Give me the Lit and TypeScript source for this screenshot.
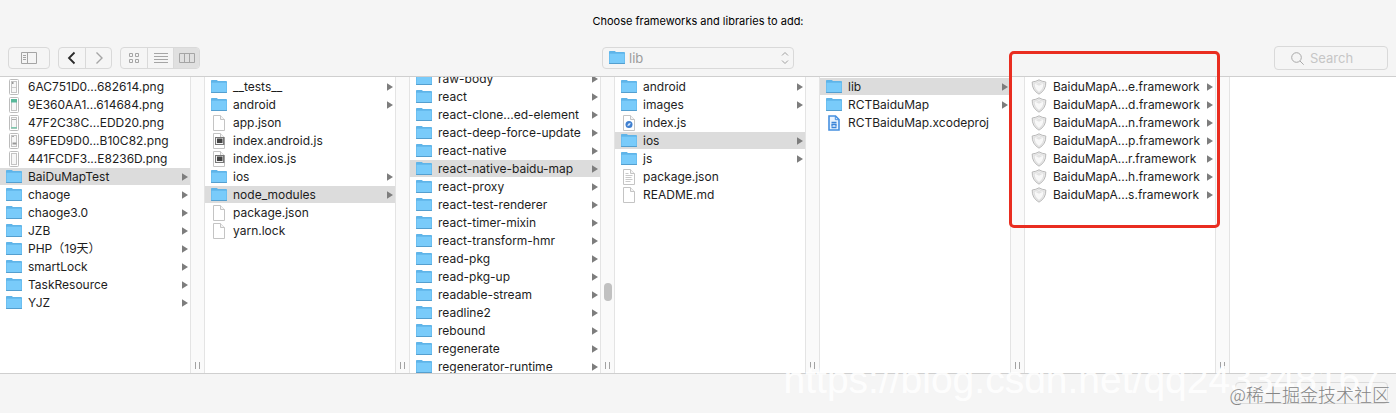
import { LitElement, html, svg, css, nothing } from "lit";
import { customElement, property } from "lit/decorators.js";
import { classMap } from "lit/directives/class-map.js";

type Kind = "folder" | "doc" | "text" | "term" | "web" | "xcode" | "shield" | "shot1" | "shot2" | "shot3" | "shot4" | "shot5";
interface Entry { name: string; kind: Kind; open?: boolean; selected?: boolean; }
interface Pane { label: string; entries: Entry[]; scrolled?: boolean; marked?: boolean; }

const dir = (name: string, selected = false): Entry => ({ name, kind: "folder", open: true, selected });
const file = (name: string, kind: Kind = "doc"): Entry => ({ name, kind });

const panes: Pane[] = [
  {
    label: "Projects",
    entries: [
      file("6AC751D0...682614.png", "shot1"),
      file("9E360AA1...614684.png", "shot2"),
      file("47F2C38C...EDD20.png", "shot3"),
      file("89FED9D0...B10C82.png", "shot4"),
      file("441FCDF3...E8236D.png", "shot5"),
      dir("BaiDuMapTest", true), dir("chaoge"), dir("chaoge3.0"), dir("JZB"),
      dir("PHP（19天）"), dir("smartLock"), dir("TaskResource"), dir("YJZ"),
    ],
  },
  {
    label: "BaiDuMapTest",
    entries: [
      dir("__tests__"), dir("android"), file("app.json"),
      file("index.android.js", "term"), file("index.ios.js", "term"),
      dir("ios"), dir("node_modules", true), file("package.json"), file("yarn.lock"),
    ],
  },
  {
    label: "node_modules",
    scrolled: true,
    entries: [
      dir("raw-body"), dir("react"), dir("react-clone...ed-element"), dir("react-deep-force-update"),
      dir("react-native"), dir("react-native-baidu-map", true), dir("react-proxy"),
      dir("react-test-renderer"), dir("react-timer-mixin"), dir("react-transform-hmr"),
      dir("read-pkg"), dir("read-pkg-up"), dir("readable-stream"), dir("readline2"),
      dir("rebound"), dir("regenerate"), dir("regenerator-runtime"),
    ],
  },
  {
    label: "react-native-baidu-map",
    entries: [
      dir("android"), dir("images"), file("index.js", "web"), dir("ios", true), dir("js"),
      file("package.json", "text"), file("README.md"),
    ],
  },
  { label: "ios", entries: [dir("lib", true), dir("RCTBaiduMap"), file("RCTBaiduMap.xcodeproj", "xcode")] },
  {
    label: "lib",
    marked: true,
    entries: ["e", "d", "n", "p", "r", "h", "s"].map((c): Entry => ({ name: `BaiduMapA...${c}.framework`, kind: "shield", open: true })),
  },
];

const page = svg`<path d="M2.500 .5h7l4 4v11h-11z" fill="#fff" stroke="#c4c4c4"/><path d="M9.500 .5v4h4" fill="#f4f4f4" stroke="#c4c4c4"/>`;
const shot = (inner: unknown) => svg`<rect x="3.500" y=".5" width="9" height="15" rx="1" fill="#fff" stroke="#bcbcbc"/><rect x="5.500" y="2.500" width="5" height="11" fill="#f7f7f7" stroke="#c4c4c4"/>${inner}`;

const art: Record<Kind, unknown> = {
  folder: svg`<path d="M0 2.500V1.700q0-.8.8-.8h5l1.200 1.200h8.200q.8 0 .8.8v10.400q0 .7-.7.700H.7q-.7 0-.7-.7z" fill="#5fb4e8"/><path d="M.5 3.700h15v9.300H.5z" fill="#79cbfa"/><path d="M0 13h16v.3q0 .7-.7.700H.7q-.7 0-.7-.7z" fill="#549fcf"/>`,
  doc: page,
  text: svg`${page}<path d="M4.500 4.500h3M4.500 6.500h7M4.500 8.500h6M4.500 10.500h7M4.500 12.500h5" stroke="#c9c9c9"/>`,
  term: svg`${page}<rect x="4" y="4" width="9.500" height="8" fill="#777"/><path d="M5 5h7v6H5z" fill="#eee"/><path d="M6 5.500h5.500V10H6z" fill="#444"/>`,
  web: svg`${page}<circle cx="8" cy="9.500" r="3.500" fill="#3f7fd0"/><path d="M6.200 11.300l1-2.600 2.600-1-1 2.600z" fill="#d8e8fb"/>`,
  xcode: svg`<path d="M3 1h6.500L13 4.500V15H3z" fill="#eaf4ff" stroke="#4690e0" stroke-width="1.600"/><path d="M9.300 1v3.700H13" fill="none" stroke="#4690e0"/><path d="M5.500 7.500h5M5.500 12.500h5M6 11.500V9.500h4v2" fill="none" stroke="#3c85d8" stroke-width="1.300"/>`,
  shield: svg`<path d="M8 .8q3 1.800 6.800 2.200.4 8-6.800 12.200Q.8 11 1.200 3 5 2.600 8 .8z" fill="#ededed" stroke="#b9b9b9"/><path d="M8 2.600q2.300 1.300 5 1.700 0 6-5 9.200-5-3.200-5-9.200 2.700-.4 5-1.700z" fill="#f8f8f8" stroke="#d6d6d6" stroke-width=".8"/><path d="M4.500 5L8 6.800 11.500 5 8 3.800z" fill="#e3e3e3"/>`,
  shot1: shot(svg`<path d="M6 3h1.500v2H6z" fill="#999"/><path d="M6 8.500h4" stroke="#ccc"/>`),
  shot2: shot(svg`<path d="M5 2h6v3.500H5z" fill="#58b89a"/>`),
  shot3: shot(svg`<path d="M6 4.500h4" stroke="#aaa"/><path d="M5 12h6v1.500H5z" fill="#7fc9ae"/>`),
  shot4: shot(svg`<path d="M6 3.500h2" stroke="#aaa"/><path d="M6.500 9.500h4v2h-4z" fill="#999"/>`),
  shot5: shot(nothing),
};

const glyph = (kind: Kind) => html`<svg class="glyph" viewBox="0 0 16 16" aria-hidden="true">${art[kind]}</svg>`;

const glyphStyles = css`
  * { box-sizing: border-box; }
  .glyph { width: 16px; height: 16px; flex: none; display: block; }
  button, input, select { font: inherit; color: inherit; margin: 0; }
`;

@customElement("file-column")
class FileColumn extends LitElement {
  @property({ attribute: false }) pane!: Pane;

  static styles = [glyphStyles, css`
    :host { display: flex; position: relative; flex: none; width: 205px; }
    .view { flex: 1; min-width: 0; overflow: hidden; }
    .list { list-style: none; margin: 0; padding: 1px 0 0; display: flex; flex-direction: column; gap: 1px; }
    .scrolled { margin-top: -8px; }
    .row {
      display: flex; align-items: center; gap: 6px; width: 100%; height: 17px;
      padding: 0 2px 0 6px; border: 0; background: none; text-align: left;
      line-height: 17px; white-space: nowrap;
    }
    .selected { background: #dcdcdc; }
    .name { flex: 1; min-width: 0; }
    .arrow { width: 6px; height: 8px; flex: none; fill: #7d7d7d; }
    .gutter {
      flex: none; width: 15px; display: flex; flex-direction: column; align-items: center;
      justify-content: space-between; padding-bottom: 4px;
      background: #fafafa; border: solid #e4e4e4; border-width: 0 1px;
    }
    .track { flex: 1; display: flex; flex-direction: column; padding-top: 206px; }
    .thumb { width: 8px; height: 18px; border-radius: 4px; background: #c1c1c1; }
    .grip { width: 5px; height: 7px; border: solid #a2a2a2; border-width: 0 1px; }
    .mark {
      position: absolute; left: -16px; top: -26px; width: 211px; height: 177px;
      border: 3px solid #e92d20; border-radius: 5px; pointer-events: none; z-index: 1;
    }
  `];

  render() {
    const { label, entries, scrolled, marked } = this.pane;
    return html`
      <div class="view">
        <ul class=${classMap({ list: true, scrolled: !!scrolled })} aria-label=${label}>
          ${entries.map((e) => html`<li>
            <button class=${classMap({ row: true, selected: !!e.selected })}>
              ${glyph(e.kind)}<span class="name">${e.name}</span>
              ${e.open ? html`<svg class="arrow" viewBox="0 0 6 8" aria-hidden="true"><path d="M0 .3L6 4 0 7.700z"/></svg>` : nothing}
            </button></li>`)}
        </ul>
      </div>
      <div class="gutter">
        <div class="track">${scrolled ? html`<div class="thumb"></div>` : nothing}</div>
        <div class="grip"></div>
      </div>
      ${marked ? html`<div class="mark"></div>` : nothing}
    `;
  }
}

@customElement("app-root")
class AppRoot extends LitElement {
  static styles = [glyphStyles, css`
    :host {
      display: flex; flex-direction: column; position: relative; height: 100vh; overflow: hidden;
      background: #f5f5f5; color: #1d1d1d;
      font: 12px/17px Inter, "Noto Sans CJK SC", sans-serif;
    }
    .title { flex: none; margin: 0; padding: 12px 0; text-align: center; font-size: 11px; font-weight: 400; line-height: 18px; color: #000; }
    .toolbar { flex: none; display: grid; grid-template-columns: 1fr 192px 1fr; align-items: center; padding: 4px 8px 6px; height: 34px; }
    .tools { display: flex; gap: 8px; }
    .group { display: flex; border: 1px solid #d9d9d9; border-radius: 4px; overflow: hidden; height: 22px; }
    .tool { width: 26px; padding: 0; border: 0; background: none; display: grid; place-items: center; color: #a5a5a5; }
    .tool + .tool { border-left: 1px solid #d9d9d9; }
    .wide { width: 40px; }
    .active { color: #2a2a2a; }
    .pressed { background: #e0e0e0; }
    .icon { display: block; width: 18px; height: 14px; fill: none; stroke: currentColor; }
    .picker { display: grid; grid-template-columns: 6px 16px 1fr 10px 2px; align-items: center; height: 22px; border: 1px solid #d9d9d9; border-radius: 4px; color: #9b9b9b; }
    .picker .glyph { grid-area: 1 / 2; }
    .picker .select { grid-area: 1 / 1 / 2 / 6; height: 20px; padding: 0 16px 0 26px; border: 0; background: none; appearance: none; width: 100%; font-size: 13px; opacity: 1; }
    .steps { grid-area: 1 / 4; width: 8px; height: 14px; fill: none; stroke: #a0a0a0; }
    .search { justify-self: end; width: 114px; height: 24px; display: flex; align-items: center; gap: 6px; padding: 0 8px 0 16px; border: 1px solid #d9d9d9; border-radius: 4px; }
    .lens { width: 13px; height: 13px; flex: none; fill: none; stroke: #a9a9a9; }
    .field { width: 100%; min-width: 0; padding: 0; border: 0; outline: 0; background: none; font-size: 13px; }
    .field::placeholder { color: #c6c6c6; opacity: 1; }
    .browser { flex: 1; display: flex; min-height: 0; background: #fff; border: solid #cfcfcf; border-width: 1px 0; }
    .footer { flex: none; height: 39px; display: flex; justify-content: flex-end; align-items: flex-start; padding: 8px; }
    .choose { width: 153px; height: 22px; border: 1px solid #dcdcdc; border-radius: 4px; background: none; }
    .link { position: absolute; right: 14px; bottom: 11px; font: 39px/44px "Liberation Sans", sans-serif; color: rgba(255, 255, 255, .9); white-space: nowrap; pointer-events: none; }
    .credit { position: absolute; right: 6px; bottom: 7px; font: 18px/24px "Noto Sans CJK SC", sans-serif; font-weight: 300; color: #858585; white-space: nowrap; pointer-events: none; }
  `];

  render() {
    return html`
      <h1 class="title">Choose frameworks and libraries to add:</h1>
      <div class="toolbar">
        <div class="tools">
          <div class="group">
            <button class="tool wide" aria-label="Toggle sidebar"><svg class="icon" viewBox="0 0 18 14"><path d="M1.500 1.500h15v11h-15zM7.500 1.500v11M3 4.500h3M3 6.500h3M3 8.500h3"/></svg></button>
          </div>
          <div class="group">
            <button class="tool active" aria-label="Back"><svg class="icon" viewBox="0 0 18 14" stroke-width="1.800"><path d="M11.500 1.500L6 7l5.500 5.500"/></svg></button>
            <button class="tool" aria-label="Forward"><svg class="icon" viewBox="0 0 18 14" stroke-width="1.400"><path d="M6.500 1.500L12 7l-5.500 5.500"/></svg></button>
          </div>
          <div class="group">
            <button class="tool" aria-label="Icons"><svg class="icon" viewBox="0 0 18 14"><path d="M4.500 2.500h3v3h-3zM10.500 2.500h3v3h-3zM4.500 8.500h3v3h-3zM10.500 8.500h3v3h-3z"/></svg></button>
            <button class="tool" aria-label="List"><svg class="icon" viewBox="0 0 18 14"><path d="M2 2.500h14M2 5.500h14M2 8.500h14M2 11.500h14"/></svg></button>
            <button class="tool pressed" aria-label="Columns" aria-pressed="true"><svg class="icon" viewBox="0 0 18 14"><path d="M1.500 2.500h15v9h-15zM6.500 2.500v9M11.500 2.500v9"/></svg></button>
          </div>
        </div>
        <div class="picker">
          ${glyph("folder")}
          <select class="select" aria-label="Location"><option>lib</option></select>
          <svg class="steps" viewBox="0 0 8 14" aria-hidden="true"><path d="M1 4.500l3-3 3 3M1 9.500l3 3 3-3"/></svg>
        </div>
        <label class="search">
          <svg class="lens" viewBox="0 0 13 13" aria-hidden="true"><circle cx="5.500" cy="5.500" r="4.800"/><path d="M9 9l3.700 3.700"/></svg>
          <input class="field" type="text" placeholder="Search" aria-label="Search" />
        </label>
      </div>
      <div class="browser">${panes.map((p) => html`<file-column .pane=${p}></file-column>`)}</div>
      <div class="footer"><button class="choose" aria-label="Add"></button></div>
      <div class="link">https://blog.csdn.net/qq243348167</div>
      <div class="credit">@稀土掘金技术社区</div>
    `;
  }
}
